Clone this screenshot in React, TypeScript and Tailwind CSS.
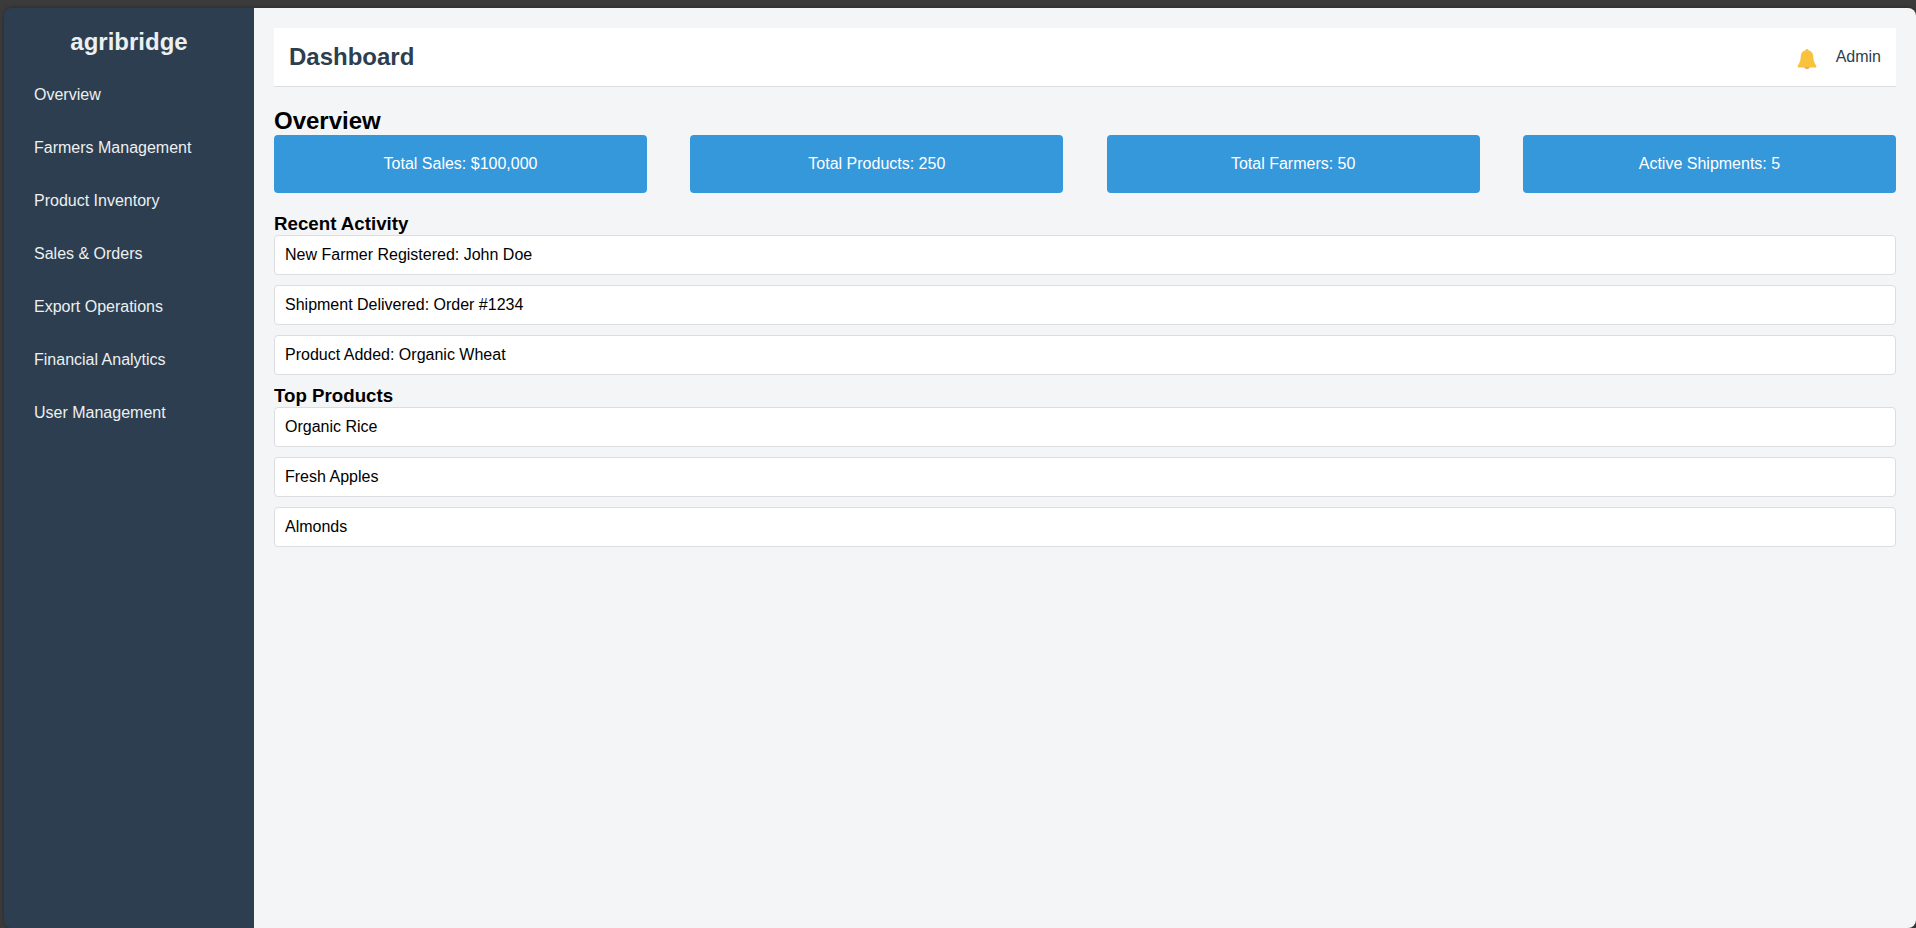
const menu = [
  "Overview",
  "Farmers Management",
  "Product Inventory",
  "Sales & Orders",
  "Export Operations",
  "Financial Analytics",
  "User Management",
];

const stats = [
  "Total Sales: $100,000",
  "Total Products: 250",
  "Total Farmers: 50",
  "Active Shipments: 5",
];

const activity = [
  "New Farmer Registered: John Doe",
  "Shipment Delivered: Order #1234",
  "Product Added: Organic Wheat",
];

const products = ["Organic Rice", "Fresh Apples", "Almonds"];

const Bell = () => {
  return (
    <svg width="20" height="22" viewBox="0 0 20 22" className="mt-1">
      <path d="M7.300 19h5.400c-.2 1.300-1.300 2-2.700 2s-2.500-.7-2.700-2z" fill="#f9963c" />
      <path
        d="M10 1c.8 0 1.300.5 1.400 1.200 2.900.6 4.600 2.800 4.800 5.800.2 3.700.7 6.500 2.600 9 .4.5.5.9.5 1.400v.6c0 .3-.2.5-.5.5H1.200c-.3 0-.5-.2-.5-.5v-.6c0-.5.1-.9.5-1.400 1.900-2.500 2.400-5.300 2.600-9 .2-3 1.900-5.200 4.800-5.800C8.700 1.500 9.200 1 10 1z"
        fill="#f9c23c"
      />
    </svg>
  );
};

const Sidebar = () => {
  return (
    <aside className="w-[250px] shrink-0 bg-[#2c3e50] p-5 text-[#ecf0f1]">
      <h2 className="mb-5 text-center text-2xl leading-7 font-bold">
        agribridge
      </h2>
      <ul className="flex flex-col gap-[15px]">
        {menu.map((item) => (
          <li key={item}>
            <a href="#" className="block p-2.5 leading-[18px]">
              {item}
            </a>
          </li>
        ))}
      </ul>
    </aside>
  );
};

const List = ({ title, items }: { title: string; items: string[] }) => {
  return (
    <section>
      <h3 className="text-[18.72px] leading-[22px] font-bold">{title}</h3>
      <ul>
        {items.map((item) => (
          <li
            key={item}
            className="mb-2.5 rounded border border-[#dcdde1] bg-white p-2.5 leading-[18px]"
          >
            {item}
          </li>
        ))}
      </ul>
    </section>
  );
};

const App = () => {
  return (
    <div className="h-screen bg-[#3b3b3b] pt-2 pl-1 font-['Liberation_Sans',Arial,sans-serif] text-base text-black">
      <div className="flex h-full overflow-hidden rounded-lg shadow-[0_0_4px_rgba(0,0,0,0.35)]">
        <Sidebar />
        <main className="flex-1 bg-[#f4f5f7] p-5">
          <header className="mb-5 flex items-center justify-between border-b border-[#dcdde1] bg-white p-[15px] text-[#2c3e50]">
            <h1 className="text-2xl leading-7 font-bold">Dashboard</h1>
            <div className="flex h-7 items-center">
              <Bell />
              <span className="ml-[19px] leading-[18px]">Admin</span>
            </div>
          </header>
          <h2 className="text-2xl leading-7 font-bold">Overview</h2>
          <div className="mb-5 flex justify-between">
            {stats.map((stat) => (
              <div
                key={stat}
                className="w-[23%] rounded bg-[#3498db] p-5 text-center leading-[18px] text-white"
              >
                {stat}
              </div>
            ))}
          </div>
          <List title="Recent Activity" items={activity} />
          <List title="Top Products" items={products} />
        </main>
      </div>
    </div>
  );
};

export default App;
